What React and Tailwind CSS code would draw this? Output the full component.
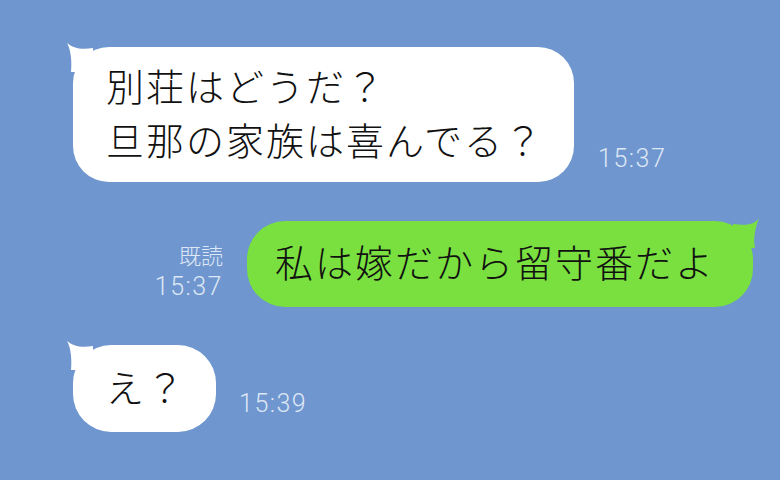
import React from 'react';

const jp = { fontFamily: '"Noto Sans CJK JP", "Noto Sans", sans-serif' };
const num = { fontFamily: 'Roboto, "Noto Sans", sans-serif' };

// tail for incoming (left) bubbles
const LeftTail = () => (
  <svg className="absolute -left-[10px] -top-[7px]" width="40" height="40" viewBox="0 0 40 40">
    <path d="M4 3 C10 8 18 10 30 8 L30 32 L8 32 C9 22 8 10 4 3 Z" fill="#ffffff" />
  </svg>
);

// tail for outgoing (right) bubble
const RightTail = () => (
  <svg className="absolute -right-[10px] -top-[5px]" width="40" height="40" viewBox="0 0 40 40">
    <path d="M36 2 C32 8 26 10 10 8 L10 32 L32 32 C30 24 32 12 36 2 Z" fill="#7ae03f" />
  </svg>
);

const Time = ({ children }) => (
  <span className="text-[25px] leading-none font-light tracking-[1.5px] text-[#dde7f5]" style={num}>
    {children}
  </span>
);

export default function App() {
  return (
    <div className="w-[780px] h-[480px] bg-[#6f96cf] overflow-hidden flex flex-col pt-[47px]" style={jp}>
      {/* incoming 1 */}
      <div className="flex items-end pl-[73px]">
        <div className="relative">
          <LeftTail />
          <div className="relative bg-white rounded-[36px] pl-[33px] pr-[30px] pt-[11px] pb-[16px] text-[38px] leading-[54px] tracking-[2px] font-light text-[#111]">
            <div>別荘はどうだ？</div>
            <div>旦那の家族は喜んでる？</div>
          </div>
        </div>
        <div className="ml-[24px] mb-[10px]">
          <Time>15:37</Time>
        </div>
      </div>

      {/* outgoing */}
      <div className="flex items-end justify-end pr-[27px] mt-[39px]">
        <div className="flex flex-col items-end mr-[24px] mb-[8px] gap-[9px]">
          <span className="text-[22px] leading-none font-light text-[#dde7f5]">既読</span>
          <Time>15:37</Time>
        </div>
        <div className="relative">
          <RightTail />
          <div className="relative bg-[#7ae03f] rounded-[38px] pl-[28px] pr-[38px] pt-[13px] pb-[19px] text-[38px] leading-[54px] tracking-[2px] font-light text-[#111]">
            私は嫁だから留守番だよ
          </div>
        </div>
      </div>

      {/* incoming 2 */}
      <div className="flex items-end pl-[73px] mt-[38px]">
        <div className="relative">
          <LeftTail />
          <div className="relative bg-white rounded-[38px] pl-[33px] pr-[30px] pt-[14px] pb-[19px] text-[38px] leading-[54px] tracking-[2px] font-light text-[#111]">
            え？
          </div>
        </div>
        <div className="ml-[23px] mb-[15px]">
          <Time>15:39</Time>
        </div>
      </div>
    </div>
  );
}
